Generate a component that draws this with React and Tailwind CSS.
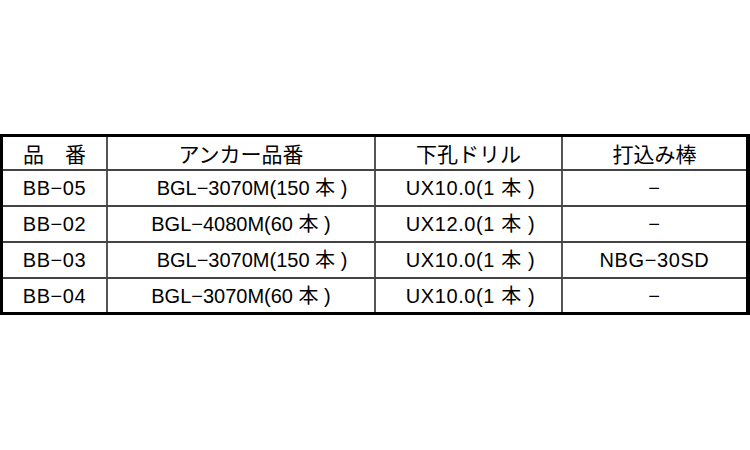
export default function App() {
  const rows = [
    ["BB−05", "BGL−3070M(150 本 )", "UX10.0(1 本 )", "−"],
    ["BB−02", "BGL−4080M(60 本 )", "UX12.0(1 本 )", "−"],
    ["BB−03", "BGL−3070M(150 本 )", "UX10.0(1 本 )", "NBG−30SD"],
    ["BB−04", "BGL−3070M(60 本 )", "UX10.0(1 本 )", "−"],
  ];
  const cell = "flex items-center justify-center tracking-[0.6px]";
  const hcell = "flex items-center justify-center text-[21px] pt-[2px]";
  return (
    <div className="w-[750px] h-[450px] bg-white pt-[134px]" style={{ fontFamily: '"Liberation Sans", "Noto Sans CJK JP", sans-serif' }}>
      <div className="w-[750px] border-t-[3px] border-l-[3px] border-r-4 border-b-[3px] border-black text-[20px] text-black leading-none">
        <div className="grid grid-cols-[103px_2px_266px_2px_185px_2px_1fr] h-[34px] border-b-2 border-[#444]">
          <div className={hcell}>品　番</div>
          <div className="bg-[#555]" />
          <div className={hcell}>アンカー品番</div>
          <div className="bg-[#555]" />
          <div className={hcell}>下孔ドリル</div>
          <div className="bg-[#555]" />
          <div className={hcell}>打込み棒</div>
        </div>
        {rows.map((r, i) => (
          <div
            key={i}
            className={`grid grid-cols-[103px_2px_266px_2px_185px_2px_1fr] ${i === 3 ? "h-[33px]" : "h-[36px] border-b-2 border-[#444]"}`}
          >
            <div className={cell}>{r[0]}</div>
            <div className="bg-[#555]" />
            <div className={`flex items-center justify-center ${r[1].includes("150") ? "pl-[22px]" : "pl-[0px]"}`}>{r[1]}</div>
            <div className="bg-[#555]" />
            <div className={`${cell} pl-[4px]`}>{r[2]}</div>
            <div className="bg-[#555]" />
            <div className={cell}>{r[3]}</div>
          </div>
        ))}
      </div>
    </div>
  );
}
